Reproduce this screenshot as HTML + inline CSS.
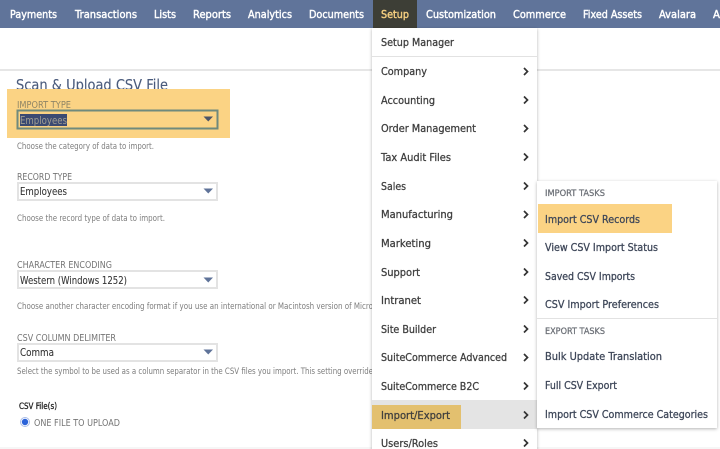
<!DOCTYPE html>
<html lang="en">
<head>
<meta charset="utf-8">
<title>Scan &amp; Upload CSV File</title>
<style>
html,body{margin:0;padding:0;background:#fff;width:720px;height:449px;overflow:hidden}
svg{display:block;filter:blur(.3px)}
text{font-family:"DejaVu Sans","Liberation Sans",sans-serif;font-size:10.5px;fill:#3f3f3f}
.n{fill:#fff;font-size:10.2px;stroke:#fff;stroke-width:.42px}
.m{fill:#3e3e3e;font-size:10.4px;stroke:#3e3e3e;stroke-width:.28px}
.s{fill:#3d4658;font-size:10.4px;stroke:#3d4658;stroke-width:.28px}
.h{fill:#6b6f76;font-size:9px;stroke:#6b6f76;stroke-width:.25px}
.l{fill:#757575;font-size:9.6px}
.p{fill:#7d7d7d;font-size:8.5px}
.v{fill:#333;font-size:10.6px;stroke:#333;stroke-width:.08px}
</style>
</head>
<body>
<svg width="720" height="449" viewBox="0 0 720 449" xmlns="http://www.w3.org/2000/svg">
<defs>
<filter id="sh" x="-10%" y="-10%" width="120%" height="120%"><feDropShadow dx="0" dy="1" stdDeviation="1.6" flood-color="#000" flood-opacity=".3"/></filter>
</defs>
<rect width="720" height="449" fill="#fff"/>
<rect x="0" y="447" width="720" height="2" fill="#f6f6f6"/>
<rect width="720" height="28" fill="#60749a"/>
<rect y="69" width="720" height="2" fill="#e6e6e6"/>
<rect x="373" width="44" height="28" fill="#3d3e36"/>

<text class="n" x="10" y="18" textLength="47" lengthAdjust="spacingAndGlyphs">Payments</text>
<text class="n" x="75" y="18" textLength="62" lengthAdjust="spacingAndGlyphs">Transactions</text>
<text class="n" x="154" y="18" textLength="22" lengthAdjust="spacingAndGlyphs">Lists</text>
<text class="n" x="193" y="18" textLength="38" lengthAdjust="spacingAndGlyphs">Reports</text>
<text class="n" x="248" y="18" textLength="44" lengthAdjust="spacingAndGlyphs">Analytics</text>
<text class="n" x="309" y="18" textLength="55" lengthAdjust="spacingAndGlyphs">Documents</text>
<text class="n" x="381" y="18" textLength="28" lengthAdjust="spacingAndGlyphs" style="fill:#f5cf80;stroke:#f5cf80">Setup</text>
<text class="n" x="426" y="18" textLength="70" lengthAdjust="spacingAndGlyphs">Customization</text>
<text class="n" x="513" y="18" textLength="53" lengthAdjust="spacingAndGlyphs">Commerce</text>
<text class="n" x="583" y="18" textLength="59" lengthAdjust="spacingAndGlyphs">Fixed Assets</text>
<text class="n" x="659" y="18" textLength="37" lengthAdjust="spacingAndGlyphs">Avalara</text>
<text class="n" x="713" y="18">A</text>

<text x="16" y="90" textLength="152" lengthAdjust="spacingAndGlyphs" style="font-size:15px;fill:#4a5b7c;stroke:#4a5b7c;stroke-width:.12px">Scan &amp; Upload CSV File</text>

<rect x="7" y="89" width="223" height="49" fill="#fbd384"/>
<text class="l" x="17" y="108" textLength="54" lengthAdjust="spacingAndGlyphs" style="fill:#8f8566">IMPORT TYPE</text>
<rect x="17.500" y="110.500" width="200" height="18" fill="#fbd384" stroke="#6f8a7d" stroke-width="2"/>
<rect x="20" y="114" width="47" height="12" fill="#3b4a72"/>
<text class="v" x="20" y="124" textLength="47" lengthAdjust="spacingAndGlyphs" style="fill:#a09e92;stroke:none">Employees</text>
<path d="M203.500 116.500h9.500l-4.750 5z" fill="#4d5567"/>
<text class="p" x="17" y="149" textLength="137" lengthAdjust="spacingAndGlyphs">Choose the category of data to import.</text>

<text class="l" x="17" y="180" textLength="55" lengthAdjust="spacingAndGlyphs">RECORD TYPE</text>
<rect x="18" y="183" width="199" height="17" fill="#fff" stroke="#e3e3e3" stroke-width="2"/>
<text class="v" x="20" y="195" textLength="47" lengthAdjust="spacingAndGlyphs">Employees</text>
<path d="M203.500 188.500h9.500l-4.750 5z" fill="#5f7399"/>
<text class="p" x="17" y="221" textLength="148" lengthAdjust="spacingAndGlyphs">Choose the record type of data to import.</text>

<text class="l" x="17" y="268" textLength="95" lengthAdjust="spacingAndGlyphs">CHARACTER ENCODING</text>
<rect x="18" y="271" width="199" height="17" fill="#fff" stroke="#e3e3e3" stroke-width="2"/>
<text class="v" x="20" y="284" textLength="107" lengthAdjust="spacingAndGlyphs">Western (Windows 1252)</text>
<path d="M203.500 277.500h9.500l-4.750 5z" fill="#5f7399"/>
<text class="p" x="17" y="309" textLength="356" lengthAdjust="spacingAndGlyphs">Choose another character encoding format if you use an international or Macintosh version of Micro</text>

<text class="l" x="17" y="341" textLength="99" lengthAdjust="spacingAndGlyphs">CSV COLUMN DELIMITER</text>
<rect x="18" y="344" width="199" height="17" fill="#fff" stroke="#e3e3e3" stroke-width="2"/>
<text class="v" x="20" y="356" textLength="34" lengthAdjust="spacingAndGlyphs">Comma</text>
<path d="M203.500 349.500h9.500l-4.750 5z" fill="#5f7399"/>
<text class="p" x="17" y="374" textLength="356" lengthAdjust="spacingAndGlyphs">Select the symbol to be used as a column separator in the CSV files you import. This setting override</text>

<text x="19" y="409" textLength="38" lengthAdjust="spacingAndGlyphs" style="font-size:8.500px;fill:#222;stroke:#222;stroke-width:.3px">CSV File(s)</text>
<circle cx="25" cy="422" r="4.500" fill="#fff" stroke="#a9bce8" stroke-width="1"/>
<circle cx="25" cy="422" r="3.200" fill="#2a62d9"/>
<text class="l" x="34" y="426" textLength="86" lengthAdjust="spacingAndGlyphs">ONE FILE TO UPLOAD</text>

<rect x="372" y="28" width="165" height="430" fill="#fff" filter="url(#sh)"/>
<rect x="372" y="56" width="165" height="1" fill="#e2e2e2"/>
<rect x="372" y="400" width="165" height="29" fill="#e4e4e4"/>
<rect x="372" y="405" width="89" height="24" fill="#e3c06f"/>

<text class="m" x="381" y="46" textLength="73" lengthAdjust="spacingAndGlyphs">Setup Manager</text>
<text class="m" x="381" y="75" textLength="46" lengthAdjust="spacingAndGlyphs">Company</text>
<text class="m" x="381" y="104" textLength="54" lengthAdjust="spacingAndGlyphs">Accounting</text>
<text class="m" x="381" y="132" textLength="95" lengthAdjust="spacingAndGlyphs">Order Management</text>
<text class="m" x="381" y="161" textLength="70" lengthAdjust="spacingAndGlyphs">Tax Audit Files</text>
<text class="m" x="381" y="190" textLength="25" lengthAdjust="spacingAndGlyphs">Sales</text>
<text class="m" x="381" y="218" textLength="72" lengthAdjust="spacingAndGlyphs">Manufacturing</text>
<text class="m" x="381" y="247" textLength="50" lengthAdjust="spacingAndGlyphs">Marketing</text>
<text class="m" x="381" y="276" textLength="39" lengthAdjust="spacingAndGlyphs">Support</text>
<text class="m" x="381" y="304" textLength="40" lengthAdjust="spacingAndGlyphs">Intranet</text>
<text class="m" x="381" y="333" textLength="55" lengthAdjust="spacingAndGlyphs">Site Builder</text>
<text class="m" x="381" y="361" textLength="126" lengthAdjust="spacingAndGlyphs">SuiteCommerce Advanced</text>
<text class="m" x="381" y="390" textLength="98" lengthAdjust="spacingAndGlyphs">SuiteCommerce B2C</text>
<text class="m" x="381" y="419" textLength="69" lengthAdjust="spacingAndGlyphs">Import/Export</text>
<text class="m" x="381" y="447" textLength="57" lengthAdjust="spacingAndGlyphs">Users/Roles</text>

<g fill="none" stroke="#333" stroke-width="1.700">
<path d="M524 68l3.500 3.500-3.500 3.500"/>
<path d="M524 96.500l3.500 3.500-3.500 3.500"/>
<path d="M524 125l3.500 3.500-3.500 3.500"/>
<path d="M524 153.500l3.500 3.500-3.500 3.500"/>
<path d="M524 182.500l3.500 3.500-3.500 3.500"/>
<path d="M524 211l3.500 3.500-3.500 3.500"/>
<path d="M524 239.500l3.500 3.500-3.500 3.500"/>
<path d="M524 268.500l3.500 3.500-3.500 3.500"/>
<path d="M524 296.500l3.500 3.500-3.500 3.500"/>
<path d="M524 325.500l3.500 3.500-3.500 3.500"/>
<path d="M524 354l3.500 3.500-3.500 3.500"/>
<path d="M524 382.500l3.500 3.500-3.500 3.500"/>
<path d="M524 411.500l3.500 3.500-3.500 3.500"/>
<path d="M524 439.500l3.500 3.500-3.500 3.500"/>
</g>

<rect x="537" y="181" width="180" height="247" fill="#fff" filter="url(#sh)"/>
<rect x="538" y="204" width="134" height="29" fill="#fbd384"/>
<rect x="537" y="318" width="180" height="1" fill="#e2e2e2"/>
<text class="h" x="545" y="196" textLength="60" lengthAdjust="spacingAndGlyphs">IMPORT TASKS</text>
<text class="s" x="545" y="223" textLength="95" lengthAdjust="spacingAndGlyphs">Import CSV Records</text>
<text class="s" x="545" y="251" textLength="113" lengthAdjust="spacingAndGlyphs">View CSV Import Status</text>
<text class="s" x="545" y="280" textLength="90" lengthAdjust="spacingAndGlyphs">Saved CSV Imports</text>
<text class="s" x="545" y="308" textLength="114" lengthAdjust="spacingAndGlyphs">CSV Import Preferences</text>
<text class="h" x="545" y="334" textLength="60" lengthAdjust="spacingAndGlyphs">EXPORT TASKS</text>
<text class="s" x="545" y="360" textLength="117" lengthAdjust="spacingAndGlyphs">Bulk Update Translation</text>
<text class="s" x="545" y="389" textLength="72" lengthAdjust="spacingAndGlyphs">Full CSV Export</text>
<text class="s" x="545" y="418" textLength="163" lengthAdjust="spacingAndGlyphs">Import CSV Commerce Categories</text>
</svg>
</body>
</html>
